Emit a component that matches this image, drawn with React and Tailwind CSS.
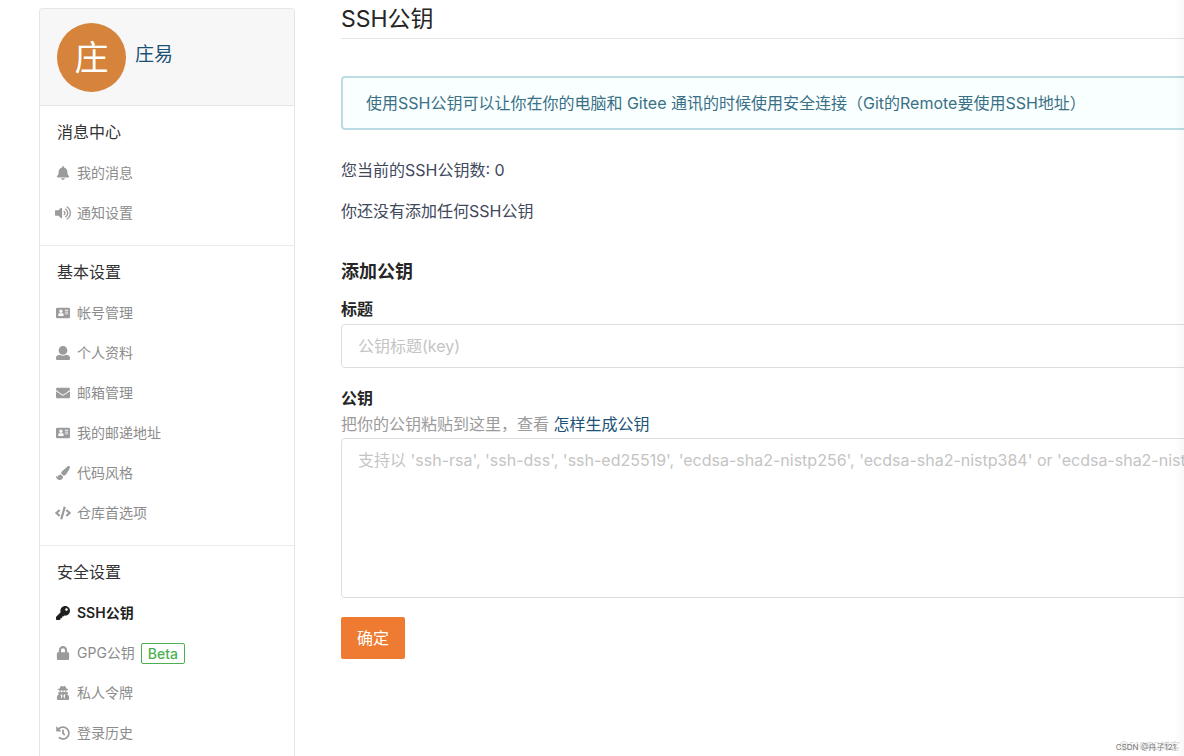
import {
  FaBell,
  FaCode,
  FaEnvelope,
  FaHistory,
  FaKey,
  FaLock,
  FaPaintBrush,
  FaUserSecret,
  FaVolumeUp,
} from "react-icons/fa";

function CardIcon(props) {
  return (
    <svg viewBox="0 0 512 512" fill="currentColor" {...props}>
      <path
        fillRule="evenodd"
        d="M48 64h416a48 48 0 0 1 48 48v288a48 48 0 0 1-48 48H48a48 48 0 0 1-48-48V112a48 48 0 0 1 48-48zM180 132a60 60 0 1 0 0 120a60 60 0 0 0 0-120zM128 260c-28 6-44 26-44 54v30c0 11 9 20 20 20h152c11 0 20-9 20-20v-30c0-28-16-48-44-54c-32 20-72 20-104 0zM324 140v34h124v-34zM324 206v34h124v-34zM324 272v34h124v-34z"
      />
    </svg>
  );
}

function PersonIcon(props) {
  return (
    <svg viewBox="0 0 512 512" fill="currentColor" {...props}>
      <path d="M256 0c88.366 0 160 71.634 160 160s-71.634 160-160 160S96 248.366 96 160 167.634 0 256 0zm183.283 333.821l-71.313-17.828c-74.923 53.89-165.738 41.864-223.94 0l-71.313 17.828C29.981 344.505 0 382.903 0 426.955V464c0 26.51 21.49 48 48 48h416c26.51 0 48-21.49 48-48v-37.045c0-44.052-29.981-82.45-72.717-93.134z" />
    </svg>
  );
}

const groups = [
  {
    title: "消息中心",
    items: [
      { label: "我的消息", icon: FaBell },
      { label: "通知设置", icon: FaVolumeUp, wide: true },
    ],
  },
  {
    title: "基本设置",
    items: [
      { label: "帐号管理", icon: CardIcon },
      { label: "个人资料", icon: PersonIcon },
      { label: "邮箱管理", icon: FaEnvelope },
      { label: "我的邮递地址", icon: CardIcon },
      { label: "代码风格", icon: FaPaintBrush },
      { label: "仓库首选项", icon: FaCode, wide: true },
    ],
  },
  {
    title: "安全设置",
    items: [
      { label: "SSH公钥", icon: FaKey, active: true },
      { label: "GPG公钥", icon: FaLock, badge: "Beta" },
      { label: "私人令牌", icon: FaUserSecret },
      { label: "登录历史", icon: FaHistory },
    ],
  },
];

function NavItem({ label, icon: Icon, active, badge, wide }) {
  return (
    <li>
      <a
        href="#"
        aria-current={active ? "page" : undefined}
        className={
          active
            ? "flex h-10 items-center gap-1.5 pl-[15px] text-sm font-semibold text-[#1f1f1f]"
            : "flex h-10 items-center gap-1.5 pl-[15px] text-sm text-[#8c8c8c]"
        }
      >
        <span className={active ? "flex w-4 justify-center" : "flex w-4 justify-center text-[#9b9b9b]"}>
          <Icon className={wide ? "size-4 shrink-0" : "size-3.5 shrink-0"} aria-hidden="true" />
        </span>
        <span>{label}</span>
        {badge && (
          <span className="rounded-xs border border-[#4caf50] px-1.5 text-sm leading-[19px] font-medium text-[#4caf50]">
            {badge}
          </span>
        )}
      </a>
    </li>
  );
}

function Sidebar() {
  return (
    <aside className="mt-2 w-64 shrink-0 rounded-t border border-b-0 border-[#e3e6e9] bg-white">
      <header className="flex h-[97px] gap-[9px] rounded-t border-b border-[#e3e6e9] bg-[#f7f7f7] px-[17px] pt-3.5">
        <span className="flex size-[69px] items-center justify-center rounded-full bg-[#d6833b] text-[34px] text-white">
          庄
        </span>
        <a href="#" className="mt-[18px] h-7 text-[19px] leading-7 text-[#1c5278]">
          庄易
        </a>
      </header>
      <nav aria-label="设置" className="divide-y divide-[#ebebeb]">
        {groups.map((group) => (
          <section key={group.title} className="py-3">
            <h2 className="mb-[7px] px-[17px] text-base leading-7 text-[#333333]">{group.title}</h2>
            <ul>
              {group.items.map((item) => (
                <NavItem key={item.label} {...item} />
              ))}
            </ul>
          </section>
        ))}
      </nav>
    </aside>
  );
}

function KeyForm() {
  return (
    <form onSubmit={(event) => event.preventDefault()}>
      <h2 className="mt-[35px] text-lg leading-7 font-semibold text-[#262626]">添加公钥</h2>
      <label htmlFor="key-title" className="mt-[11px] block text-base leading-6 font-semibold text-[#262626]">
        标题
      </label>
      <input
        id="key-title"
        type="text"
        placeholder="公钥标题(key)"
        className="mt-[3px] block h-11 w-full rounded border border-[#dcdfe2] px-4 text-base placeholder:text-[#c4c4c4]"
      />
      <label htmlFor="key-body" className="mt-[18px] block text-base leading-6 font-semibold text-[#262626]">
        公钥
      </label>
      <p className="text-base leading-7 text-[#9b9b9b]">
        把你的公钥粘贴到这里，查看{" "}
        <a href="#" className="text-[#1c5278]">
          怎样生成公钥
        </a>
      </p>
      <textarea
        id="key-body"
        placeholder="支持以 'ssh-rsa', 'ssh-dss', 'ssh-ed25519', 'ecdsa-sha2-nistp256', 'ecdsa-sha2-nistp384' or 'ecdsa-sha2-nistp521' 开头"
        className="block h-40 w-full resize-none rounded border border-[#dcdfe2] px-4 py-[9px] text-base placeholder:text-[#c4c4c4]"
      />
      <button type="submit" className="mt-[19px] h-[42px] rounded-xs bg-[#ee7b31] px-4 text-base text-white">
        确定
      </button>
    </form>
  );
}

export default function App() {
  return (
    <div className="relative flex h-screen overflow-hidden bg-white pl-[39px] font-[Inter,'Noto_Sans_CJK_SC',sans-serif]">
      <Sidebar />
      <main className="ml-[46px] w-full min-w-[1080px]">
        <h1 className="border-b border-[#e3e3e3] pt-[3px] pb-[3px] text-[23px] leading-8 text-[#262626]">SSH公钥</h1>
        <p className="mt-[37px] rounded border-2 border-[#bddbe4] bg-[#f9ffff] px-[23px] py-[13px] text-base leading-6 text-[#3a7085]">
          使用SSH公钥可以让你在你的电脑和 Gitee 通讯的时候使用安全连接（Git的Remote要使用SSH地址）
        </p>
        <p className="mt-7 text-base leading-6 text-[#40485b]">您当前的SSH公钥数: 0</p>
        <p className="mt-[17px] text-base leading-6 text-[#40485b]">你还没有添加任何SSH公钥</p>
        <KeyForm />
      </main>
      <div className="pointer-events-none absolute inset-y-0 right-0 w-2.5 bg-linear-to-r from-transparent to-black/3" />
      <div className="pointer-events-none absolute right-1 bottom-0.5 text-[10px] leading-4 text-[#d6d6d6]">
        @51CTO博客
      </div>
      <div className="pointer-events-none absolute right-2 bottom-px text-[8px] leading-4 text-[#7a7a7a]">
        CSDN @舟子121
      </div>
    </div>
  );
}
